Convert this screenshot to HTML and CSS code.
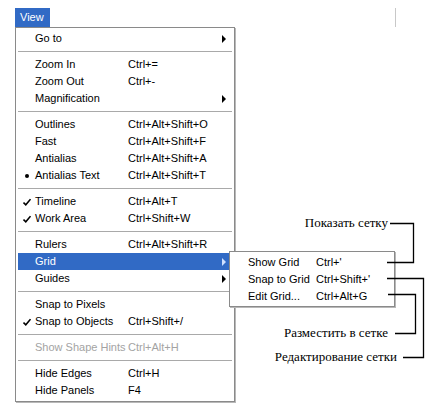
FILE: index.html
```html
<!DOCTYPE html>
<html lang="en">
<head>
    <meta charset="UTF-8">
    <title>View menu</title>
    <link rel="stylesheet" href="styles.css">
</head>
<body>
<div class="stage">

    <!-- Menu bar with the open title -->
    <div class="menubar">
        <span class="menu-title">View</span>
        <span class="edge-mark"></span>
    </div>

    <!-- Main drop-down -->
    <div class="menu">
        <div class="item"><span class="mark"></span><span>Go to</span><span></span><span class="arrow"></span></div>
        <div class="sep"></div>
        <div class="item"><span class="mark"></span><span>Zoom In</span><span>Ctrl+=</span></div>
        <div class="item"><span class="mark"></span><span>Zoom Out</span><span>Ctrl+-</span></div>
        <div class="item"><span class="mark"></span><span>Magnification</span><span></span><span class="arrow"></span></div>
        <div class="sep"></div>
        <div class="item"><span class="mark"></span><span>Outlines</span><span>Ctrl+Alt+Shift+O</span></div>
        <div class="item"><span class="mark"></span><span>Fast</span><span>Ctrl+Alt+Shift+F</span></div>
        <div class="item"><span class="mark"></span><span>Antialias</span><span>Ctrl+Alt+Shift+A</span></div>
        <div class="item"><span class="mark"><span class="dot"></span></span><span>Antialias Text</span><span>Ctrl+Alt+Shift+T</span></div>
        <div class="sep"></div>
        <div class="item"><span class="mark"><svg width="8" height="8" viewBox="0 0 8 8"><path d="M0.5 4.5 L2.8 6.8 L7.5 1.2" fill="none" stroke="#000" stroke-width="1.6"/></svg></span><span>Timeline</span><span>Ctrl+Alt+T</span></div>
        <div class="item"><span class="mark"><svg width="8" height="8" viewBox="0 0 8 8"><path d="M0.5 4.5 L2.8 6.8 L7.5 1.2" fill="none" stroke="#000" stroke-width="1.6"/></svg></span><span>Work Area</span><span>Ctrl+Shift+W</span></div>
        <div class="sep"></div>
        <div class="item"><span class="mark"></span><span>Rulers</span><span>Ctrl+Alt+Shift+R</span></div>
        <div class="item active"><span class="mark"></span><span>Grid</span><span></span><span class="arrow"></span></div>
        <div class="item"><span class="mark"></span><span>Guides</span><span></span><span class="arrow"></span></div>
        <div class="sep"></div>
        <div class="item"><span class="mark"></span><span>Snap to Pixels</span><span></span></div>
        <div class="item"><span class="mark"><svg width="8" height="8" viewBox="0 0 8 8"><path d="M0.5 4.5 L2.8 6.8 L7.5 1.2" fill="none" stroke="#000" stroke-width="1.6"/></svg></span><span>Snap to Objects</span><span>Ctrl+Shift+/</span></div>
        <div class="sep"></div>
        <div class="item disabled"><span class="mark"></span><span>Show Shape Hints</span><span>Ctrl+Alt+H</span></div>
        <div class="sep"></div>
        <div class="item"><span class="mark"></span><span>Hide Edges</span><span>Ctrl+H</span></div>
        <div class="item"><span class="mark"></span><span>Hide Panels</span><span>F4</span></div>
    </div>

    <!-- Grid submenu -->
    <div class="submenu">
        <div class="sub-item"><span></span><span>Show Grid</span><span>Ctrl+'</span></div>
        <div class="sub-item"><span></span><span>Snap to Grid</span><span>Ctrl+Shift+'</span></div>
        <div class="sub-item"><span></span><span>Edit Grid...</span><span>Ctrl+Alt+G</span></div>
    </div>

    <!-- Callout lines and labels -->
    <svg class="callouts" width="442" height="416">
        <polyline points="390,223.5 413.5,223.5 413.5,262.5 387,262.5" />
        <polyline points="387,278.5 423.5,278.5 423.5,357.5 403,357.5" />
        <polyline points="388,294.5 415.5,294.5 415.5,333.5 395,333.5" />
    </svg>
    <span class="note note-show">Показать сетку</span>
    <span class="note note-place">Разместить в сетке</span>
    <span class="note note-edit">Редактирование сетки</span>

</div>
</body>
</html>
```

FILE: styles.css
```css
body {
    margin: 0;
    background-color: #fff;
    font-family: 'Liberation Sans', Arial, sans-serif;
    font-size: 11px;
    color: #000;
}

.stage {
    position: relative;
    width: 442px;
    height: 416px;
    overflow: hidden;
}

/* Menu bar */
.menubar {
    display: flex;
    height: 19px;
    padding: 8px 0 0 15px;
}

.menu-title {
    width: 35px;
    height: 19px;
    line-height: 19px;
    padding-left: 5px;
    box-sizing: border-box;
    background-color: #316ac5;
    color: #fff;
}

.edge-mark {
    width: 1px;
    height: 19px;
    margin-left: 345px;
    background-color: #c8c8c8;
}

/* Drop-down menu */
.menu {
    width: 220px;
    margin-left: 15px;
    box-sizing: border-box;
    border: 1px solid #8a8a8a;
    padding: 2px 2px 2px;
    background-color: #fff;
    box-shadow: 1px 1px 0 #b8b8b8;
}

.item {
    display: grid;
    grid-template-columns: 17px 93px 1fr 12px;
    align-items: center;
    height: 17px;
    line-height: 17px;
    white-space: nowrap;
}

.item.active {
    background-color: #316ac5;
    color: #fff;
}

.item.disabled {
    color: #a3a3a3;
}

.mark {
    display: flex;
    align-items: center;
    padding-left: 5px;
}

.dot {
    width: 4px;
    height: 4px;
    margin-left: 2px;
    border-radius: 50%;
    background-color: #000;
}

.arrow {
    width: 0;
    height: 0;
    margin-left: 2px;
    border-left: 4px solid #000;
    border-top: 4px solid transparent;
    border-bottom: 4px solid transparent;
}

.item.active .arrow {
    border-left-color: #cfe0ff;
}

.sep {
    height: 9px;
    box-sizing: border-box;
    padding-top: 4px;
}

.sep::before {
    content: "";
    display: block;
    height: 1px;
    background-color: #a9a9a9;
}

/* Grid submenu */
.submenu {
    position: absolute;
    left: 229px;
    top: 251px;
    width: 166px;
    height: 56px;
    box-sizing: border-box;
    border: 1px solid #8a8a8a;
    padding-top: 2px;
    background-color: #fff;
    box-shadow: 1px 1px 0 #b8b8b8;
}

.sub-item {
    display: grid;
    grid-template-columns: 18px 68px 1fr;
    height: 17px;
    line-height: 17px;
    white-space: nowrap;
}

/* Callouts */
.callouts {
    position: absolute;
    left: 0;
    top: 0;
}

.callouts polyline {
    fill: none;
    stroke: #000;
    stroke-width: 1.3;
}

.note {
    position: absolute;
    font-family: 'Liberation Serif', 'Times New Roman', serif;
    font-size: 13px;
    line-height: 16px;
    white-space: nowrap;
}

.note-show {
    right: 54px;
    top: 215px;
}

.note-place {
    right: 54px;
    top: 325px;
}

.note-edit {
    right: 45px;
    top: 349px;
}
```
